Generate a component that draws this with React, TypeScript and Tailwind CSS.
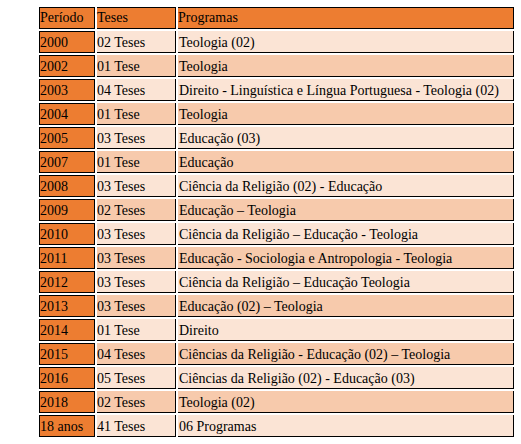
const rows: [string, string, string][] = [
  ['2000', '02 Teses', 'Teologia (02)'],
  ['2002', '01 Tese', 'Teologia'],
  ['2003', '04 Teses', 'Direito - Linguística e Língua Portuguesa - Teologia (02)'],
  ['2004', '01 Tese', 'Teologia'],
  ['2005', '03 Teses', 'Educação (03)'],
  ['2007', '01 Tese', 'Educação'],
  ['2008', '03 Teses', 'Ciência da Religião (02) - Educação'],
  ['2009', '02 Teses', 'Educação – Teologia'],
  ['2010', '03 Teses', 'Ciência da Religião – Educação - Teologia'],
  ['2011', '03 Teses', 'Educação - Sociologia e Antropologia - Teologia'],
  ['2012', '03 Teses', 'Ciência da Religião – Educação Teologia'],
  ['2013', '03 Teses', 'Educação (02) – Teologia'],
  ['2014', '01 Tese', 'Direito'],
  ['2015', '04 Teses', 'Ciências da Religião - Educação (02) – Teologia'],
  ['2016', '05 Teses', 'Ciências da Religião (02) - Educação (03)'],
  ['2018', '02 Teses', 'Teologia (02)'],
  ['18 anos', '41 Teses', '06 Programas'],
];

export default function App() {
  return (
    <div className="bg-white min-h-[444px] pt-[7px] pl-[39px] text-black text-[14px] leading-[20px] font-['Liberation_Serif','DejaVu_Serif',serif]">
      <div className="grid grid-cols-[56px_79px_336px] gap-[2px]">
        {/* Header */}
        <div className="h-[22px] bg-[#ED7D31] border border-black whitespace-nowrap">Período</div>
        <div className="h-[22px] bg-[#ED7D31] border-t border-r border-b border-black whitespace-nowrap">Teses</div>
        <div className="h-[22px] bg-[#ED7D31] border-t border-r border-b border-black whitespace-nowrap">Programas</div>

        {rows.map(([year, teses, prog], i) => {
          const bg = i % 2 === 0 ? 'bg-[#FBE4D5]' : 'bg-[#F7CAAC]';
          return [
            <div key={year + 'a'} className="h-[22px] bg-[#ED7D31] border border-black pt-px whitespace-nowrap">
              {year}
            </div>,
            <div key={year + 'b'} className={`h-[22px] ${bg} border-r border-b border-black pt-[2px] whitespace-nowrap`}>
              {teses}
            </div>,
            <div key={year + 'c'} className={`h-[22px] ${bg} border-r border-b border-black pt-[2px] pl-px whitespace-nowrap`}>
              {prog}
            </div>,
          ];
        })}
      </div>
    </div>
  );
}
